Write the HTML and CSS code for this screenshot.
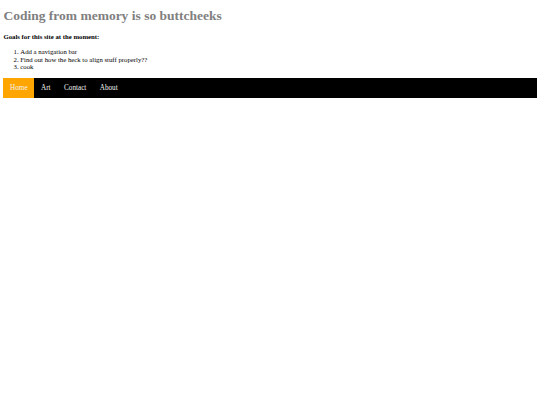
FILE: index.html
```html
<!DOCTYPE html>
<html>
<head>
<meta charset="utf-8">
<link rel="stylesheet" href="styles.css">
</head>
<body>
<h1 class="title">Coding from memory is so buttcheeks</h1>
<h4 class="goals">Goals for this site at the moment:</h4>
<ol class="goal-list">
  <li>Add a navigation bar</li>
  <li>Find out how the heck to align stuff properly??</li>
  <li>cook</li>
</ol>
<ul class="nav">
  <li><a class="active" href="#">Home</a></li>
  <li><a href="#">Art</a></li>
  <li><a href="#">Contact</a></li>
  <li><a href="#">About</a></li>
</ul>
</body>
</html>
```
FILE: styles.css
```css
html, body {
  margin: 0;
  padding: 0;
}
body {
  padding: 0 3.4px;
  font-family: "Liberation Serif", "Times New Roman", serif;
  font-size: 6.75px;
  color: #000;
  background: #fff;
}
.title {
  margin: 8.4px 0 0;
  font-size: 13.5px;
  line-height: 16px;
  font-weight: bold;
  color: gray;
}
.goals {
  margin: 8.8px 0 0;
  font-size: 6.75px;
  line-height: 8px;
  font-weight: bold;
}
.goal-list {
  margin: 7.3px 0 0;
  padding-left: 16.9px;
  line-height: 7.5px;
}
.nav {
  list-style: none;
  margin: 7px 0 0;
  padding: 0;
  display: flex;
  background: #000;
}
.nav a {
  display: block;
  color: #f2f2f2;
  text-decoration: none;
  font-size: 7.2px;
  line-height: 8.2px;
  padding: 5.9px 6.7px;
}
.nav a.active {
  background: orange;
}
```
